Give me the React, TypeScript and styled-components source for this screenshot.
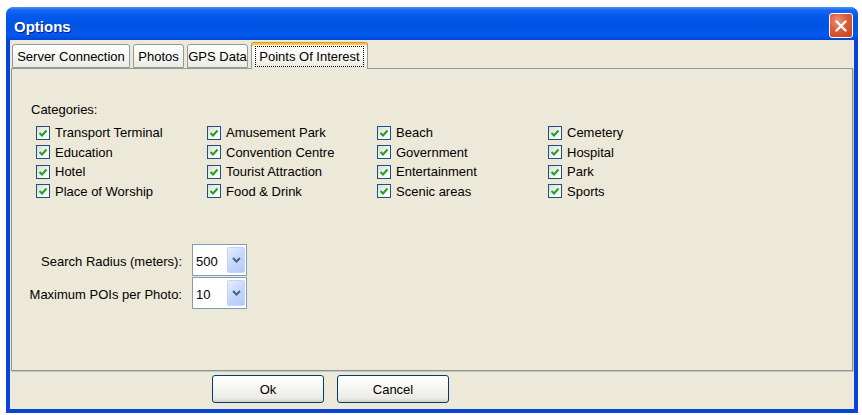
import React from 'react';
import styled, { createGlobalStyle } from 'styled-components';

const Global = createGlobalStyle`
  html, body { margin: 0; padding: 0; background: #ffffff; }
  body { font-family: "Liberation Sans", Arial, sans-serif; font-size: 13px; color: #000; }
  * { box-sizing: border-box; }
`;

const Page = styled.div`
  padding: 7px 0 0 6px;
`;

const Window = styled.div`
  width: 852px;
  height: 406px;
  display: flex;
  flex-direction: column;
  border-radius: 8px 8px 0 0;
  overflow: hidden;
  background: #0A3FD4;
`;

const TitleBar = styled.div`
  height: 33px;
  flex: none;
  display: flex;
  align-items: center;
  justify-content: space-between;
  padding: 0 5px 0 8px;
  background: linear-gradient(to bottom, #4C95FA 0%, #1767F2 9%, #0058EC 30%, #0054E3 60%, #0059EE 85%, #0147D6 100%);
`;

const Title = styled.span`
  margin-top: 5px;
  font-family: "Liberation Sans", Arial, sans-serif;
  font-weight: bold;
  font-size: 15px;
  color: #ffffff;
  text-shadow: 1px 1px 0 #0A1C8A;
`;

const CloseButton = styled.div`
  align-self: flex-end;
  margin-bottom: 2px;
  width: 24px;
  height: 25px;
  border: 1px solid #ffffff;
  border-radius: 3px;
  background: radial-gradient(circle at 35% 30%, #EC9479 0%, #DB5A38 45%, #C2411F 100%);
  display: flex;
  align-items: center;
  justify-content: center;
`;

const Frame = styled.div`
  flex: 1;
  display: flex;
  padding: 0 4px 4px 4px;
  background: linear-gradient(to right, #0831D9 0%, #166AEE 50%, #0831D9 100%);
  background: #0A44D6;
`;

const Client = styled.div`
  flex: 1;
  display: flex;
  flex-direction: column;
  background: #ECE9D8;
`;

const TabRow = styled.div`
  height: 26px;
  margin: 2px 1px 0 1px;
  padding-left: 1px;
  display: flex;
  align-items: flex-end;
  gap: 3px;
`;

const Tab = styled.div<{ $w: number; $active?: boolean }>`
  width: ${p => p.$w}px;
  height: ${p => (p.$active ? 27 : 24)}px;
  margin-bottom: ${p => (p.$active ? -1 : 0)}px;
  position: relative;
  z-index: ${p => (p.$active ? 2 : 0)};
  display: flex;
  align-items: center;
  justify-content: center;
  white-space: nowrap;
  border: 1px solid #919B9C;
  border-bottom: ${p => (p.$active ? 'none' : '1px solid #919B9C')};
  border-radius: 3px 3px 0 0;
  background: ${p =>
    p.$active
      ? 'linear-gradient(to bottom, #FFFFFF 0%, #F7F6F1 60%, #ECE9D8 100%)'
      : 'linear-gradient(to bottom, #FFFFFF 0%, #F7F7F4 50%, #EBEAE3 100%)'};
  box-shadow: ${p => (p.$active ? 'inset 0 2px 0 #FFC73C' : 'none')};
  border-top-color: ${p => (p.$active ? '#E68B2C' : '#919B9C')};
  padding-top: ${p => (p.$active ? 0 : 0)}px;
`;

const FocusText = styled.span`
  outline: 1px dotted #000;
  outline-offset: 1px;
  padding: 0 2px;
  line-height: 17px;
`;

const Panel = styled.div`
  height: 303px;
  margin: 0 1px;
  border: 1px solid #919B9C;
  border-right-color: #8A9394;
  border-bottom-color: #8A9394;
  box-shadow: 1px 1px 0 #C9C6B5;
  background: #ECE9D8;
  display: flex;
  flex-direction: column;
  padding-top: 33px;
`;

const SectionLabel = styled.div`
  padding-left: 19px;
  line-height: 16px;
`;

const CheckGrid = styled.div`
  margin-top: 5px;
  padding-left: 24px;
  display: grid;
  grid-template-columns: 171px 170px 171px 171px;
  grid-auto-rows: 19.5px;
`;

const CheckItem = styled.label`
  display: flex;
  align-items: center;
  gap: 5px;
  white-space: nowrap;
`;

const CheckBox = styled.span`
  width: 14px;
  height: 14px;
  flex: none;
  border: 1px solid #1C5180;
  background: linear-gradient(135deg, #DCDCD7 0%, #F4F4F1 60%, #FFFFFF 100%);
  display: flex;
  align-items: center;
  justify-content: center;
`;

const FormGrid = styled.div`
  margin-top: 43px;
  padding-left: 10px;
  display: grid;
  grid-template-columns: 160px 55px;
  grid-auto-rows: 32px;
  column-gap: 10px;
  row-gap: 1px;
  align-items: center;
`;

const FormLabel = styled.div`
  text-align: right;
  white-space: nowrap;
  padding-top: 3px;
`;

const Combo = styled.div`
  height: 32px;
  border: 1px solid #7F9DB9;
  background: #ffffff;
  display: flex;
  align-items: stretch;
`;

const ComboValue = styled.span`
  flex: 1;
  display: flex;
  align-items: center;
  padding-left: 3px;
  padding-top: 2px;
`;

const ComboButton = styled.span`
  width: 18px;
  margin: 2px 1px 2px 0;
  border-radius: 2px;
  border: 1px solid #C3D3FD;
  background: linear-gradient(135deg, #E8EFFE 0%, #C9D9FC 45%, #B1C8F7 100%);
  display: flex;
  align-items: center;
  justify-content: center;
`;

const ButtonRow = styled.div`
  flex: 1;
  display: flex;
  align-items: flex-start;
  gap: 13px;
  padding: 4px 0 0 202px;
`;

const Button = styled.button`
  width: 112px;
  height: 28px;
  border: 1px solid #003C74;
  border-radius: 3px;
  background: linear-gradient(to bottom, #FFFFFF 0%, #F6F6F3 40%, #ECEBE6 85%, #D6D0C5 100%);
  font-family: "Liberation Sans", Arial, sans-serif;
  font-size: 13px;
  color: #000;
  padding: 0;
`;

const Check = () => (
  <svg width="10" height="10" viewBox="0 0 10 10">
    <path d="M1.5 5 L4 7.5 L8.5 2.5" stroke="#21A121" strokeWidth="2" fill="none" />
  </svg>
);

const categories = [
  'Transport Terminal', 'Amusement Park', 'Beach', 'Cemetery',
  'Education', 'Convention Centre', 'Government', 'Hospital',
  'Hotel', 'Tourist Attraction', 'Entertainment', 'Park',
  'Place of Worship', 'Food & Drink', 'Scenic areas', 'Sports',
];

const Chevron = () => (
  <svg width="9" height="6" viewBox="0 0 9 6">
    <path d="M1 1 L4.5 4.5 L8 1" stroke="#4D6185" strokeWidth="2" fill="none" />
  </svg>
);

export default function App() {
  return (
    <>
      <Global />
      <Page>
        <Window>
          <TitleBar>
            <Title>Options</Title>
            <CloseButton>
              <svg width="12" height="12" viewBox="0 0 12 12">
                <path d="M1.5 1.5 L10.5 10.5 M10.5 1.5 L1.5 10.5" stroke="#ffffff" strokeWidth="2.4" strokeLinecap="round" />
              </svg>
            </CloseButton>
          </TitleBar>
          <Frame>
            <Client>
              <TabRow>
                <Tab $w={118}>Server Connection</Tab>
                <Tab $w={51}>Photos</Tab>
                <Tab $w={61}>GPS Data</Tab>
                <Tab $w={117} $active>
                  <FocusText>Points Of Interest</FocusText>
                </Tab>
              </TabRow>
              <Panel>
                <SectionLabel>Categories:</SectionLabel>
                <CheckGrid>
                  {categories.map(c => (
                    <CheckItem key={c}>
                      <CheckBox>
                        <Check />
                      </CheckBox>
                      {c}
                    </CheckItem>
                  ))}
                </CheckGrid>
                <FormGrid>
                  <FormLabel>Search Radius (meters):</FormLabel>
                  <Combo>
                    <ComboValue>500</ComboValue>
                    <ComboButton><Chevron /></ComboButton>
                  </Combo>
                  <FormLabel>Maximum POIs per Photo:</FormLabel>
                  <Combo>
                    <ComboValue>10</ComboValue>
                    <ComboButton><Chevron /></ComboButton>
                  </Combo>
                </FormGrid>
              </Panel>
              <ButtonRow>
                <Button>Ok</Button>
                <Button>Cancel</Button>
              </ButtonRow>
            </Client>
          </Frame>
        </Window>
      </Page>
    </>
  );
}
